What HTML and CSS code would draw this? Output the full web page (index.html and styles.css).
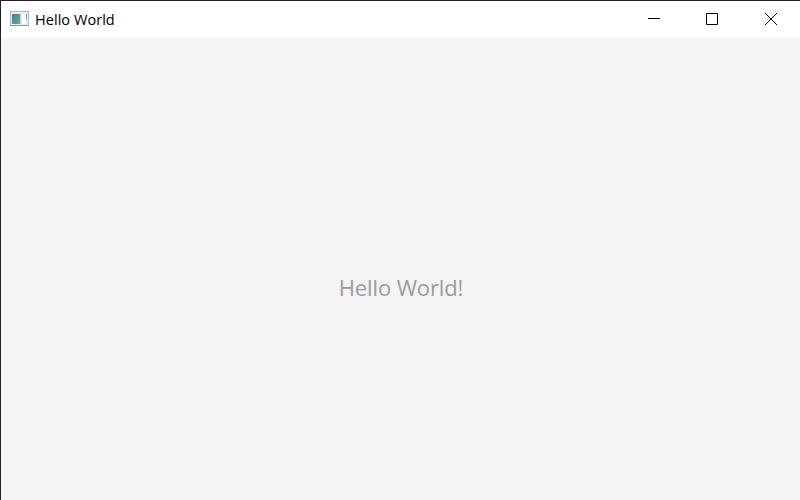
FILE: index.html
```html
<!DOCTYPE html>
<html lang="en">
<head>
<meta charset="utf-8">
<title>Hello World</title>
<link rel="stylesheet" href="styles.css">
</head>
<body>
<div class="window">
  <header class="titlebar">
    <svg class="app-icon" width="20" height="16" viewBox="0 0 20 16" shape-rendering="crispEdges">
      <defs>
        <linearGradient id="pane" x1="0" y1="0" x2="1" y2="1"><stop offset="0" stop-color="#4277a6"/><stop offset="1" stop-color="#68b584"/></linearGradient>
        <linearGradient id="bar" x1="0" y1="0" x2="0" y2="1"><stop offset="0" stop-color="#5487b8"/><stop offset="1" stop-color="#8fca9c"/></linearGradient>
      </defs>
      <rect x="0" y="0" width="19" height="15" fill="#b3b7ba"/>
      <rect x="1" y="1" width="17" height="13" fill="#eceff0"/>
      <rect x="0" y="14" width="19" height="1" fill="#92979a"/>
      <rect x="2" y="3" width="9" height="10" fill="#b9d3d6"/>
      <rect x="2" y="3" width="8" height="10" fill="url(#pane)"/>
      <rect x="12" y="3" width="4" height="10" fill="#fafafa"/>
      <rect x="16" y="3" width="1" height="6" fill="url(#bar)"/>
    </svg>
    <span class="title">Hello World</span>
    <div class="controls">
      <svg width="58" height="37" viewBox="0 0 58 37"><path d="M23 17.5h12"/></svg>
      <svg width="58" height="37" viewBox="0 0 58 37"><path d="M23.5 12.5h11v11h-11z"/></svg>
      <svg width="59" height="37" viewBox="0 0 59 37"><path d="M24 12l12 12M36 12l-12 12"/></svg>
    </div>
  </header>
  <main class="content"><span class="greeting">Hello World!</span></main>
</div>
</body>
</html>
```
FILE: styles.css
```css
* { box-sizing: border-box; }
body { margin: 0; font-family: "Open Sans", "Noto Sans", sans-serif; }
.window {
  height: 500px;
  display: flex;
  flex-direction: column;
  border-top: 1px solid #231f20;
  border-left: 1px solid #231f20;
  background: #f4f4f4;
  overflow: hidden;
}
.titlebar {
  display: flex;
  align-items: flex-start;
  height: 37px;
  padding-left: 9px;
  background: #fff;
}
.app-icon { margin-top: 10px; }
.title { margin: 9px 0 0 5px; font-size: 14.5px; line-height: 20px; letter-spacing: 0.05px; color: #000; white-space: nowrap; }
.controls { display: flex; margin-left: auto; }
.controls path { fill: none; stroke: #000; stroke-width: 1; }
.content { flex: 1; display: flex; align-items: center; justify-content: center; padding: 36px 0 0 1px; }
.greeting { font-size: 22px; line-height: 30px; letter-spacing: -0.12px; color: #9c9c9c; white-space: nowrap; }
```
